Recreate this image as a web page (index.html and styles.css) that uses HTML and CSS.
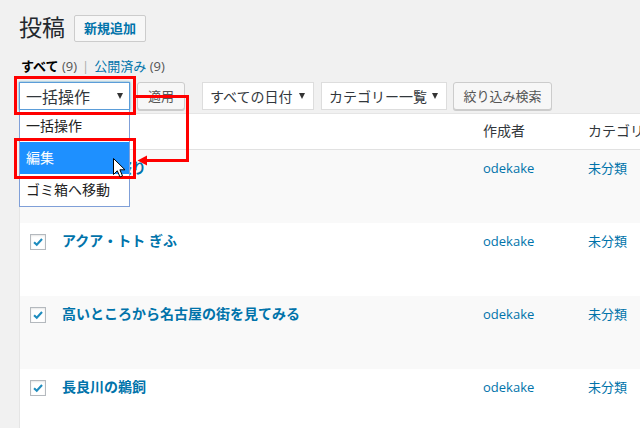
FILE: index.html
```html
<!DOCTYPE html>
<html lang="ja">
<head>
<meta charset="utf-8">
<title>投稿</title>
<link rel="stylesheet" href="styles.css">
</head>
<body>
<div class="wrap">
  <div class="head">
    <h1 class="page-title">投稿</h1>
    <a class="add-new">新規追加</a>
  </div>
  <ul class="subsubsub">
    <li class="current">すべて <span class="count">(9)</span></li>
    <li class="sep">|</li>
    <li><a class="link">公開済み</a> <span class="count">(9)</span></li>
  </ul>
  <div class="tablenav">
    <div class="bulk">
      <div class="select focus bulk-select"><span>一括操作</span><i class="arr"></i></div>
      <ul class="dropdown">
        <li class="opt">一括操作</li>
        <li class="opt selected">編集</li>
        <li class="opt">ゴミ箱へ移動</li>
      </ul>
    </div>
    <button class="button apply">適用</button>
    <div class="select date-select"><span>すべての日付</span><i class="arr"></i></div>
    <div class="select cat-select"><span>カテゴリー一覧</span><i class="arr"></i></div>
    <button class="button filter">絞り込み検索</button>
  </div>
  <div class="table">
    <div class="row thead">
      <div class="cell"></div>
      <div class="cell"></div>
      <div class="cell th">作成者</div>
      <div class="cell th">カテゴリー</div>
    </div>
    <div class="row alt">
      <div class="cell"><span class="cb"><svg viewBox="0 0 16 16" class="check"><path d="M3.5 8.2 L6.6 11.2 L12.6 4.6"/></svg></span></div>
      <div class="cell"><a class="row-title">岐阜の夏祭り</a></div>
      <div class="cell"><a class="link">odekake</a></div>
      <div class="cell"><a class="link">未分類</a></div>
    </div>
    <div class="row">
      <div class="cell"><span class="cb"><svg viewBox="0 0 16 16" class="check"><path d="M3.5 8.2 L6.6 11.2 L12.6 4.6"/></svg></span></div>
      <div class="cell"><a class="row-title">アクア・トト ぎふ</a></div>
      <div class="cell"><a class="link">odekake</a></div>
      <div class="cell"><a class="link">未分類</a></div>
    </div>
    <div class="row alt">
      <div class="cell"><span class="cb"><svg viewBox="0 0 16 16" class="check"><path d="M3.5 8.2 L6.6 11.2 L12.6 4.6"/></svg></span></div>
      <div class="cell"><a class="row-title">高いところから名古屋の街を見てみる</a></div>
      <div class="cell"><a class="link">odekake</a></div>
      <div class="cell"><a class="link">未分類</a></div>
    </div>
    <div class="row">
      <div class="cell"><span class="cb"><svg viewBox="0 0 16 16" class="check"><path d="M3.5 8.2 L6.6 11.2 L12.6 4.6"/></svg></span></div>
      <div class="cell"><a class="row-title">長良川の鵜飼</a></div>
      <div class="cell"><a class="link">odekake</a></div>
      <div class="cell"><a class="link">未分類</a></div>
    </div>
  </div>
</div>
<svg class="annot" width="640" height="428" viewBox="0 0 640 428">
  <rect x="15.5" y="77.5" width="119" height="36" fill="none" stroke="#f00" stroke-width="3"/>
  <rect x="15.5" y="139.5" width="119" height="38" fill="none" stroke="#f00" stroke-width="3"/>
  <polyline points="136,96.5 187.5,96.5 187.5,160.5 146,160.5" fill="none" stroke="#f00" stroke-width="3"/>
  <polygon points="137.5,160.5 147,155.5 147,165.5" fill="#f00"/>
  <path transform="translate(113.5 158.5)" d="M0 0 L0 16 L3.8 12.3 L6.5 18.5 L9 17.4 L6.4 11.3 L11.5 11.3 Z" fill="#fff" stroke="#000" stroke-width="1" stroke-linejoin="miter"/>
</svg>
</body>
</html>
```

FILE: styles.css
```css
html, body {
  margin: 0;
  padding: 0;
  width: 640px;
  height: 428px;
  overflow: hidden;
  background: #f1f1f1;
  font-family: "Open Sans", "Noto Sans CJK JP", sans-serif;
  color: #23282d;
}

.wrap {
  position: relative;
  padding-left: 19px;
}

.head {
  display: flex;
  align-items: center;
  gap: 9px;
  margin-top: 13px;
  height: 29px;
}

.page-title {
  margin: 0;
  font-size: 23px;
  font-weight: 400;
  line-height: 29px;
  color: #23282d;
}

.add-new {
  display: block;
  height: 25px;
  line-height: 25px;
  padding: 0 9px;
  border: 1px solid #ccc;
  border-radius: 2px;
  background: #f7f7f7;
  color: #0073aa;
  font-size: 13px;
  font-weight: 700;
  margin-top: 1px;
}

.subsubsub {
  list-style: none;
  margin: 14px 0 0 2px;
  padding: 0;
  display: flex;
  gap: 5px;
  font-size: 13px;
  line-height: 20px;
  height: 20px;
}

.subsubsub .current {
  font-weight: 700;
  color: #000;
}

.subsubsub .current .count {
  font-weight: 400;
}

.count {
  color: #555;
}

.sep {
  color: #aaa;
}

.link {
  color: #0073aa;
}

.tablenav {
  display: flex;
  align-items: flex-start;
  margin-top: 6px;
  height: 28px;
}

.bulk {
  position: relative;
  z-index: 5;
}

.select {
  box-sizing: border-box;
  height: 28px;
  display: flex;
  align-items: center;
  justify-content: space-between;
  background: #fff;
  border: 1px solid #ddd;
  font-size: 14px;
  color: #32373c;
  padding: 0 8px 0 7px;
}

.select.focus {
  border-color: #5b9dd9;
  box-shadow: 0 0 2px rgba(30, 140, 190, 0.8);
}

.bulk-select {
  width: 111px;
  font-size: 16px;
  padding: 0 6px 0 6px;
}

.arr {
  display: block;
  width: 0;
  height: 0;
  border-left: 3.5px solid transparent;
  border-right: 3.5px solid transparent;
  border-top: 6px solid #333;
}

.date-select {
  width: 112px;
  margin-left: 17px;
}

.cat-select {
  width: 126px;
  margin-left: 7px;
}

.button {
  box-sizing: border-box;
  height: 28px;
  padding: 0 10px;
  background: #f7f7f7;
  border: 1px solid #ccc;
  border-radius: 3px;
  box-shadow: 0 1px 0 #ccc;
  color: #555;
  font-family: "Open Sans", "Noto Sans CJK JP", sans-serif;
  font-size: 13px;
  line-height: 26px;
}

.apply {
  width: 48px;
  margin-left: 7px;
}

.filter {
  width: 99px;
  margin-left: 6px;
  padding: 0 6px;
}

.dropdown {
  position: absolute;
  left: 0;
  top: 28px;
  width: 111px;
  box-sizing: border-box;
  margin: 0;
  padding: 0;
  list-style: none;
  background: #fff;
  border: 1px solid #7f9fd8;
  border-top: none;
}

.opt {
  height: 32px;
  line-height: 32px;
  padding-left: 6px;
  font-size: 14px;
  color: #222;
}

.opt.selected {
  background: #1e90ff;
  color: #fff;
}

.table {
  margin-top: 3px;
  width: 700px;
  background: #fff;
  border-top: 1px solid #e5e5e5;
  border-left: 1px solid #e5e5e5;
}

.row {
  display: grid;
  grid-template-columns: 42px 421px 105px 1fr;
  height: 73px;
  box-sizing: border-box;
  padding-top: 8px;
  background: #fff;
}

.row.alt {
  background: #f9f9f9;
}

.row.thead {
  height: 36px;
  padding-top: 7px;
  border-bottom: 1px solid #e1e1e1;
}

.cell {
  line-height: 20px;
  font-size: 13px;
  white-space: nowrap;
}

.th {
  font-size: 14px;
  color: #32373c;
}

.cb {
  display: block;
  box-sizing: border-box;
  width: 16px;
  height: 16px;
  margin: 3px 0 0 10px;
  border: 1px solid #b4b9be;
  background: #fff;
  box-shadow: inset 0 1px 2px rgba(0, 0, 0, 0.1);
}

.check {
  display: block;
  width: 14px;
  height: 14px;
}

.check path {
  fill: none;
  stroke: #1e8cbe;
  stroke-width: 2.4;
}

.row-title {
  font-size: 14px;
  font-weight: 700;
  color: #0073aa;
}

.annot {
  position: absolute;
  left: 0;
  top: 0;
  z-index: 10;
  pointer-events: none;
}
```
